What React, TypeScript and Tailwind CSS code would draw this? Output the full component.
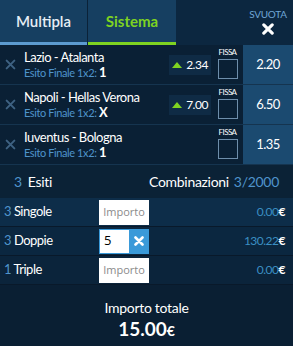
import React from "react";

const font = { fontFamily: "Lato, 'Open Sans', sans-serif" };

function XIcon({ className = "" }: { className?: string }) {
  return (
    <svg viewBox="0 0 10 10" className={className} fill="none" stroke="currentColor" strokeWidth="1.8" strokeLinecap="round">
      <path d="M1.5 1.5 L8.5 8.5 M8.5 1.5 L1.5 8.5" />
    </svg>
  );
}

const bets = [
  { name: "Lazio - Atalanta", res: "1", odd: "2.34", val: "2.20", showOdd: true },
  { name: "Napoli - Hellas Verona", res: "X", odd: "7.00", val: "6.50", showOdd: true },
  { name: "Iuventus - Bologna", res: "1", odd: "", val: "1.35", showOdd: false },
];

const sys = [
  { n: "3", label: "Singole", val: "0.00", input: "", bg: "bg-[#0d2d49]" },
  { n: "3", label: "Doppie", val: "130.22", input: "5", bg: "bg-[#0b2740]" },
  { n: "1", label: "Triple", val: "0.00", input: "", bg: "bg-[#0b243b]" },
];

export default function App() {
  return (
    <div className="w-[293px] h-[346px] bg-[#0a2035] text-white flex flex-col overflow-hidden" style={font}>
      {/* Header */}
      <div className="flex h-[45px] shrink-0">
        <div className="w-[87px] bg-[#163f61] border-b-[3px] border-[#5c9bd0] flex items-center justify-center text-[15px] font-semibold text-[#e6eef5]">
          Multipla
        </div>
        <div className="w-px bg-[#0b2238]" />
        <div className="w-[88px] bg-[#163f61] border-b-[3px] border-[#7ed321] flex items-center justify-center text-[15px] font-bold text-[#7ed321]">
          Sistema
        </div>
        <div className="flex-1 bg-[#0c2740]" />
        <div className="w-[50px] bg-[#0c2740] flex flex-col items-center pt-[8px]">
          <span className="text-[10px] leading-[12px] text-[#6fa6d6] tracking-tight">SVUOTA</span>
          <XIcon className="w-[12px] h-[12px] mt-[3px] text-white [stroke-width:2.6]" />
        </div>
      </div>

      {/* Bets */}
      {bets.map((b, i) => (
        <div key={i} className="flex h-[40px] shrink-0 border-b border-[#15344f]">
          <div className="flex-1 flex items-center bg-[#0a2035]">
            <XIcon className="w-[11px] h-[11px] ml-[5px] mr-[8px] text-[#3e6283]" />
            <div className="flex flex-col flex-1 leading-none">
              <span className="text-[13px] leading-[15px] tracking-[-0.5px] text-white">{b.name}</span>
              <span className="text-[11px] leading-[14px] tracking-[-0.4px] text-[#4f94cc]">
                Esito Finale 1x2: <span className="text-white font-bold text-[13px]">{b.res}</span>
              </span>
            </div>
            {b.showOdd && (
              <div className="w-[42px] h-[20px] bg-[#0f2b45] flex items-center justify-center gap-[4px] mr-[5px] mt-[1px]">
                <span className="w-0 h-0 border-l-[5px] border-r-[5px] border-b-[6px] border-l-transparent border-r-transparent border-b-[#7ed321]" />
                <span className="text-[12px] tracking-[-0.5px] text-white">{b.odd}</span>
              </div>
            )}
            <div className="w-[23px] mr-[4px] flex flex-col items-center self-start pt-[3px]">
              <span className="text-[8px] leading-[9px] tracking-[-0.6px] text-white">FISSA</span>
              <div className="w-[20px] h-[20px] border border-[#6e8eab] mt-[2px]" />
            </div>
          </div>
          <div className="w-[50px] bg-[#1b4a70] flex items-center justify-center text-[13px] tracking-[-0.5px] text-white">
            {b.val}
          </div>
        </div>
      ))}

      {/* Esiti */}
      <div className="h-[33px] shrink-0 bg-[#0b2236] flex items-center px-[14px] text-[14px] tracking-[-0.3px]">
        <span className="text-[#4f94cc] mr-[6px]">3</span>
        <span className="text-white">Esiti</span>
        <span className="ml-auto text-white">Combinazioni</span>
        <span className="ml-[5px] text-[#4f94cc]">3/2000</span>
      </div>

      {/* System rows */}
      {sys.map((s, i) => (
        <div key={i} className={`h-[29px] shrink-0 flex items-center ${s.bg} border-b border-[#09192a]`}>
          <span className="w-[99px] pl-[4px] text-[13px] tracking-[-0.5px]">
            <span className="text-[#4f94cc]">{s.n}</span> <span className="text-white">{s.label}</span>
          </span>
          {s.input ? (
            <div className="w-[50px] h-[25px] flex border border-[#3a9ad9]">
              <div className="flex-1 bg-white text-black text-[13px] flex items-center pl-[4px]" style={{ fontFamily: "'Open Sans', sans-serif" }}>
                {s.input}
              </div>
              <div className="w-[19px] bg-[#3a9ad9] flex items-center justify-center">
                <XIcon className="w-[10px] h-[10px] text-white [stroke-width:2.6]" />
              </div>
            </div>
          ) : (
            <div className="w-[50px] h-[25px] bg-white flex items-center justify-center text-[11px] text-[#8a8a8a]" style={{ fontFamily: "'Open Sans', sans-serif" }}>
              Importo
            </div>
          )}
          <span className="ml-auto pr-[8px] text-[12px] tracking-[-0.5px] text-[#3b8fc3]">
            {s.val}
            <span className="text-white font-bold">€</span>
          </span>
        </div>
      ))}

      {/* Total */}
      <div className="flex-1 bg-[#0a1f33] flex flex-col items-center justify-center pt-[10px]">
        <span className="text-[14px] leading-[18px] tracking-[-0.3px] text-white">Importo totale</span>
        <span className="text-[19px] leading-[24px] font-bold text-white">
          15.00<span className="text-[14px]">€</span>
        </span>
      </div>
    </div>
  );
}
